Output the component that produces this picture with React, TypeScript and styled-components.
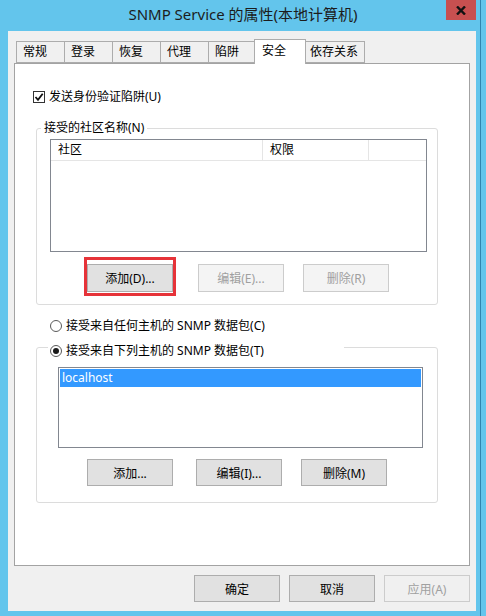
import React from "react";
import styled, { createGlobalStyle } from "styled-components";

const Global = createGlobalStyle`
  html, body { margin: 0; padding: 0; background: #63c5ec; }
  body {
    font-family: "Noto Sans", "Noto Sans CJK SC", sans-serif;
    font-size: 12px;
    color: #000;
  }
  * { box-sizing: border-box; }
`;

const Desktop = styled.div`
  width: 486px;
  height: 616px;
  display: flex;
  background: #63c5ec;
  overflow: hidden;
`;

const Window = styled.div`
  width: 481px;
  height: 616px;
  display: flex;
  flex-direction: column;
  background: #63c5ec;
  border-right: 1px solid #2f86b0;
`;

const TitleBar = styled.div`
  height: 31px;
  flex: none;
  display: flex;
  align-items: flex-start;
  padding-left: 40px;
`;

const Title = styled.div`
  flex: 1;
  text-align: center;
  font-size: 15px;
  line-height: 20px;
  padding-top: 4px;
  color: #1c1c1c;
  white-space: nowrap;
`;

const CloseButton = styled.div`
  width: 30px;
  height: 20px;
  margin-right: 4px;
  background: #c75050;
  display: flex;
  align-items: center;
  justify-content: center;
`;

const Client = styled.div`
  flex: 1;
  margin: 0 4px 5px 8px;
  background: #f0f0f0;
  padding: 8px 0 9px 0;
  display: flex;
  flex-direction: column;
`;

const TabStrip = styled.div`
  height: 24px;
  display: flex;
  align-items: flex-end;
  padding-left: 8px;
`;

const Tab = styled.div<{ $active?: boolean; $first?: boolean }>`
  position: relative;
  height: ${(p) => (p.$active ? 25 : 22)}px;
  min-width: ${(p) => (p.$active ? 52 : 49)}px;
  padding: 0 ${(p) => (p.$active ? 7 : 6)}px;
  border: 1px solid #acacac;
  border-bottom: ${(p) => (p.$active ? "none" : "1px solid #acacac")};
  margin: 0 ${(p) => (p.$active ? -2 : 0)}px ${(p) => (p.$active ? -1 : 0)}px
    ${(p) => (p.$first ? 0 : p.$active ? -3 : -1)}px;
  background: ${(p) => (p.$active ? "#ffffff" : "#f0f0f0")};
  z-index: ${(p) => (p.$active ? 2 : 1)};
  line-height: ${(p) => (p.$active ? 21 : 20)}px;
  white-space: nowrap;
`;

const Panel = styled.div`
  height: 503px;
  margin: 0 6px;
  border: 1px solid #a3a3a3;
  background: #ffffff;
  padding-top: 25px;
  display: flex;
  flex-direction: column;
  align-items: flex-start;
`;

const OptionRow = styled.label<{ $ml: number; $mt?: number }>`
  display: flex;
  align-items: center;
  gap: 4px;
  height: 16px;
  line-height: 16px;
  margin-left: ${(p) => p.$ml}px;
  margin-top: ${(p) => p.$mt ?? 0}px;
  white-space: nowrap;
`;

const CheckBox = styled.span`
  width: 12px;
  height: 12px;
  border: 1px solid #333;
  background: #fff;
  display: flex;
  align-items: center;
  justify-content: center;
`;

const RadioCircle = styled.span`
  width: 12px;
  height: 12px;
  border-radius: 50%;
  border: 1px solid #5a5a5a;
  background: #fff;
  display: flex;
  align-items: center;
  justify-content: center;
`;

const RadioDot = styled.span`
  width: 6px;
  height: 6px;
  border-radius: 50%;
  background: #1a1a1a;
`;

const Group = styled.fieldset<{ $mt: number; $pt: number; $pb: number }>`
  margin: ${(p) => p.$mt}px 0 0 21px;
  width: 402px;
  min-width: 0;
  border: 1px solid #dcdcdc;
  border-radius: 3px;
  padding: ${(p) => p.$pt}px 0 ${(p) => p.$pb}px 0;
  display: flex;
  flex-direction: column;
  align-items: flex-start;
`;

const TextLegend = styled.legend`
  margin-left: 4px;
  padding: 0 3px;
  line-height: 16px;
  font-size: 12px;
  white-space: nowrap;
`;

const RadioLegend = styled.legend`
  margin-left: 11px;
  width: 296px;
  padding: 8px 2px 0 2px;
  line-height: 16px;
`;

const ListView = styled.div`
  margin-left: 13px;
  width: 377px;
  height: 113px;
  border: 1px solid #828790;
  background: #fff;
`;

const ListHeader = styled.div`
  display: grid;
  grid-template-columns: 212px 106px;
  height: 21px;
  border-bottom: 1px solid #e5e5e5;
`;

const HeaderCell = styled.div`
  padding-left: 7px;
  line-height: 20px;
  border-right: 1px solid #e5e5e5;
`;

const ListBox = styled.div`
  margin-left: 21px;
  width: 365px;
  height: 81px;
  border: 1px solid #828790;
  background: #fff;
  padding: 1px;
`;

const ListItem = styled.div<{ $selected?: boolean }>`
  height: 18px;
  line-height: 18px;
  padding-left: 2px;
  background: ${(p) => (p.$selected ? "#3399ff" : "transparent")};
  color: ${(p) => (p.$selected ? "#fff" : "#000")};
`;

const ButtonRow = styled.div<{ $mt: number }>`
  display: flex;
  margin-top: ${(p) => p.$mt}px;
  padding-left: 50px;
`;

const Button = styled.div<{ $ml?: number; $h?: number; $disabled?: boolean; $onGray?: boolean }>`
  position: relative;
  width: 86px;
  height: ${(p) => p.$h ?? 27}px;
  margin-left: ${(p) => p.$ml ?? 0}px;
  border: 1px solid ${(p) => (p.$disabled ? "#cccccc" : "#adadad")};
  background: ${(p) => (p.$disabled ? (p.$onGray ? "#f0f0f0" : "#f4f4f4") : "#e1e1e1")};
  color: ${(p) => (p.$disabled ? "#a0a0a0" : "#000")};
  display: flex;
  align-items: center;
  justify-content: center;
  white-space: nowrap;
`;

const Highlight = styled.span`
  position: absolute;
  left: -4px;
  top: -8px;
  width: 92px;
  height: 39px;
  border: 3px solid #e63339;
  pointer-events: none;
`;

const Footer = styled.div`
  margin-top: 9px;
  display: flex;
  justify-content: flex-end;
  gap: 9px;
  padding-right: 6px;
`;

const tabs = ["常规", "登录", "恢复", "代理", "陷阱", "安全", "依存关系"];

export default function App() {
  return (
    <>
      <Global />
      <Desktop>
        <Window>
          <TitleBar>
            <Title>SNMP Service 的属性(本地计算机)</Title>
            <CloseButton>
              <svg width="10" height="9" viewBox="0 0 10 9">
                <path d="M1 0.5 L9 8.5 M9 0.5 L1 8.5" stroke="#111" strokeWidth="2.4" />
              </svg>
            </CloseButton>
          </TitleBar>
          <Client>
            <TabStrip>
              {tabs.map((t, i) => (
                <Tab key={t} $first={i === 0} $active={t === "安全"}>
                  {t}
                </Tab>
              ))}
            </TabStrip>
            <Panel>
              <OptionRow $ml={18}>
                <CheckBox>
                  <svg width="10" height="10" viewBox="0 0 10 10">
                    <path d="M1.5 5 L4 7.8 L8.7 1.8" stroke="#111" strokeWidth="1.8" fill="none" />
                  </svg>
                </CheckBox>
                发送身份验证陷阱(U)
              </OptionRow>

              <Group $mt={15} $pt={3} $pb={12}>
                <TextLegend>接受的社区名称(N)</TextLegend>
                <ListView>
                  <ListHeader>
                    <HeaderCell>社区</HeaderCell>
                    <HeaderCell>权限</HeaderCell>
                  </ListHeader>
                </ListView>
                <ButtonRow $mt={12}>
                  <Button $h={28}>
                    添加(D)...
                    <Highlight />
                  </Button>
                  <Button $h={28} $ml={25} $disabled>
                    编辑(E)...
                  </Button>
                  <Button $h={28} $ml={19} $disabled>
                    删除(R)
                  </Button>
                </ButtonRow>
              </Group>

              <OptionRow $ml={35} $mt={13}>
                <RadioCircle />
                接受来自任何主机的 SNMP 数据包(C)
              </OptionRow>

              <Group $mt={1} $pt={8} $pb={16}>
                <RadioLegend>
                  <OptionRow $ml={0}>
                    <RadioCircle>
                      <RadioDot />
                    </RadioCircle>
                    接受来自下列主机的 SNMP 数据包(T)
                  </OptionRow>
                </RadioLegend>
                <ListBox>
                  <ListItem $selected>localhost</ListItem>
                </ListBox>
                <ButtonRow $mt={11}>
                  <Button>添加...</Button>
                  <Button $ml={23}>编辑(I)...</Button>
                  <Button $ml={19}>删除(M)</Button>
                </ButtonRow>
              </Group>
            </Panel>
            <Footer>
              <Button>确定</Button>
              <Button>取消</Button>
              <Button $disabled $onGray>
                应用(A)
              </Button>
            </Footer>
          </Client>
        </Window>
      </Desktop>
    </>
  );
}
